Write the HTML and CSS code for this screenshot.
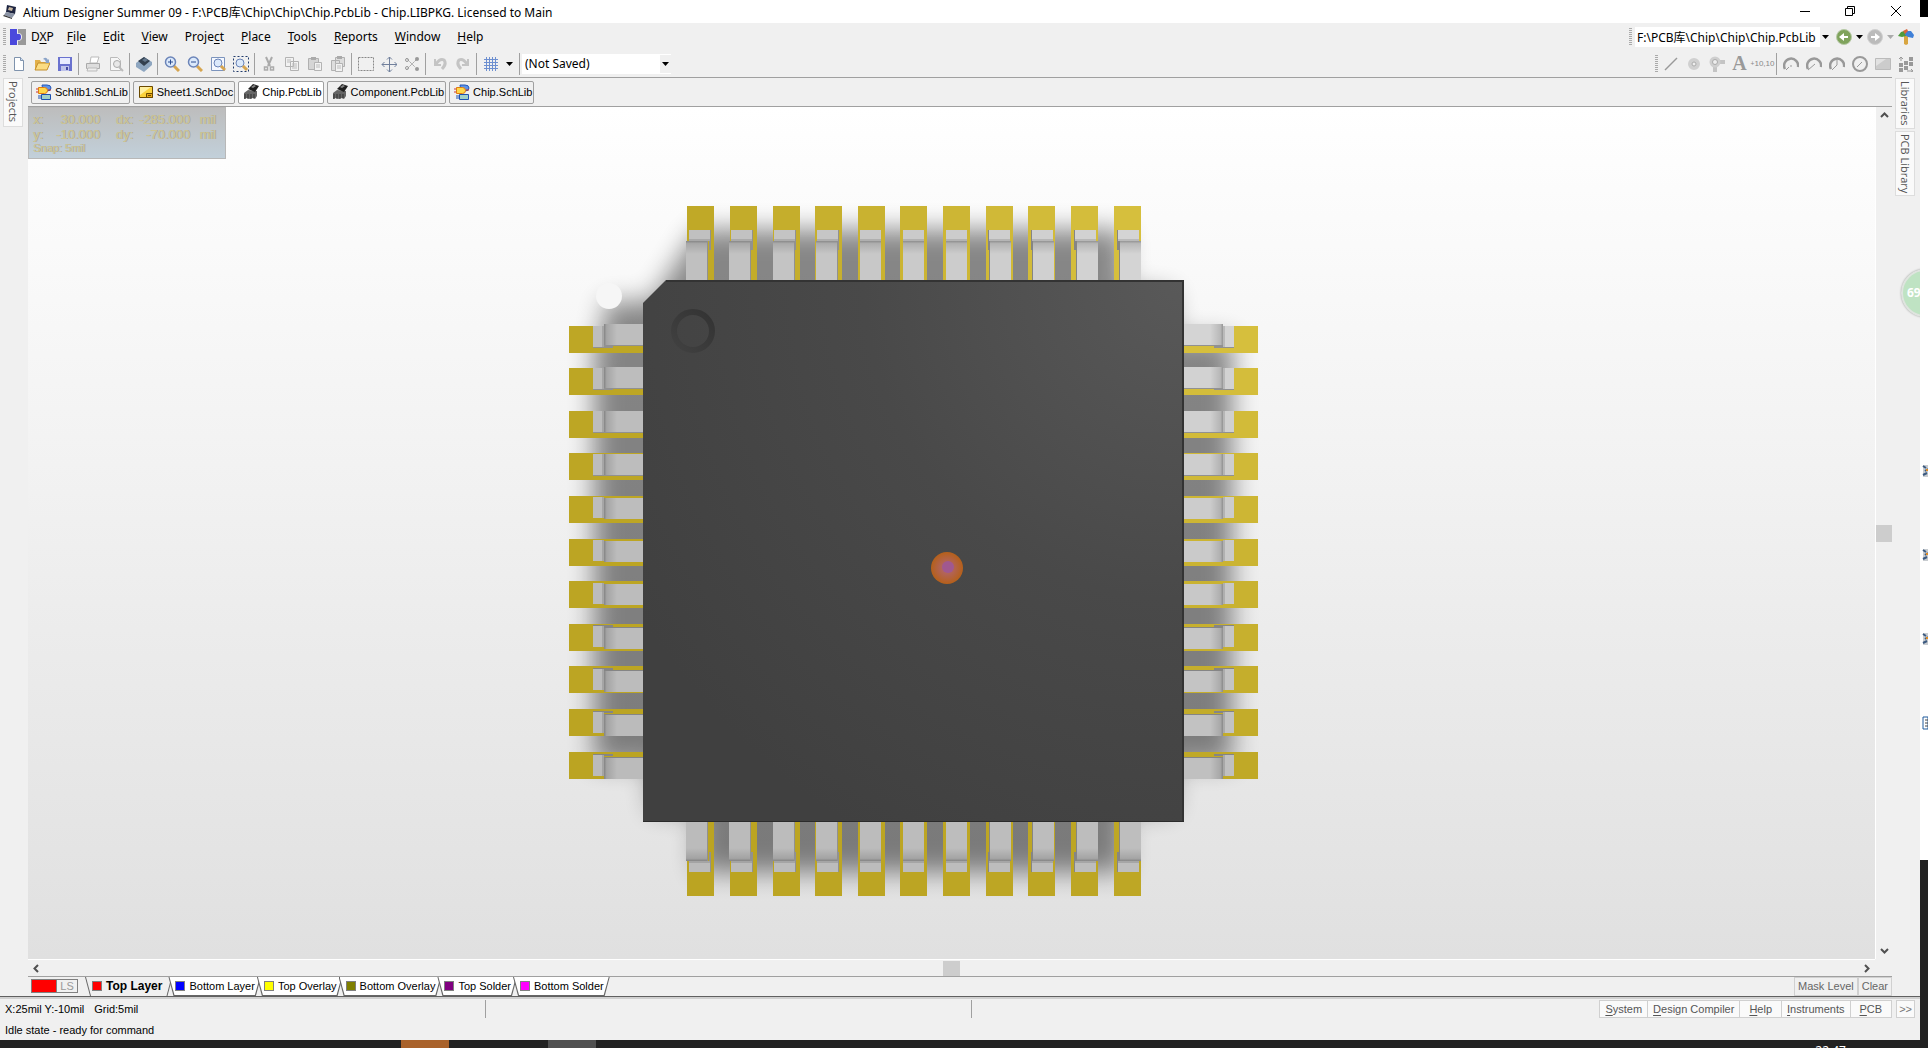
FILE: index.html
```html
<!DOCTYPE html>
<html lang="en">
<head>
  <meta charset="UTF-8">
  <meta name="viewport" content="width=device-width, initial-scale=1.0">
  <title>Altium Designer Summer 09</title>
  <link rel="stylesheet" href="styles.css">
</head>
<body>
  <!-- shared icon shapes -->
  <svg class="defs" aria-hidden="true">
    <symbol id="i-sch" viewBox="0 0 16 16">
      <path d="M6 1h5q4 0 4 3q0 3-4 3H7z" fill="#5d94ea" stroke="#2458b8"/>
      <path d="M2.500 3.500h6q3 0 3 3t-3 3h-6z" fill="#ffd84a" stroke="#e07b10"/>
      <path d="M0 5h2M0 8h2M12 6h3" stroke="#c33"/>
      <path d="M5.500 10.500h9v5h-9z" fill="#9fd0c8" stroke="#1c50b0"/>
      <path d="M2 12h3M2 14h3" stroke="#1c50b0"/>
    </symbol>
    <symbol id="i-doc" viewBox="0 0 16 16">
      <path d="M1.500 2.500h13v11h-13z" fill="#fbd23c" stroke="#6b4a00"/>
      <path d="M2 3h11L2 11z" fill="#fff0a0"/>
      <path d="M8.500 9.500h6v4h-6z" fill="#e8a818" stroke="#6b4a00"/>
      <path d="M10 11.500h3" stroke="#6b4a00"/>
    </symbol>
    <symbol id="i-pcb" viewBox="0 0 16 16">
      <path d="M1 9l4-3 9 1v5l-2 3-3-1-2 1-3-1-3 1z" fill="#666"/>
      <path d="M5 5l5-5 6 2-4 6z" fill="#1e1e1e"/>
      <path d="M8 3l3-2 2 1-3 2z" fill="#888"/>
      <path d="M2 10v5M5 10v5M8 10v5M11 10v4" stroke="#2e2e2e"/>
    </symbol>
    <symbol id="i-down" viewBox="0 0 7 4"><path d="M0 0h7L3.500 4z" fill="currentColor"/></symbol>
    <symbol id="i-lens" viewBox="0 0 16 16">
      <path d="M10 10l5 5" stroke="#d6a550" stroke-width="3"/>
      <circle cx="6.500" cy="6" r="5" fill="#dbe9fb" stroke="#6b84b8" stroke-width="1.500"/>
    </symbol>
    <symbol id="i-arc" viewBox="0 0 16 16">
      <path d="M2 13A7 7 0 1 1 15 11" fill="none" stroke="#999" stroke-width="2.500"/>
    </symbol>
  </svg>

  <div class="screen">
    <div class="app">
      <header class="title-bar">
        <svg class="icon" viewBox="0 0 16 16"><path d="M5 1l9 2-1 7-9-2z" fill="#1d2440"/><path d="M7 3l4 1-1 3-4-1z" fill="#c9b8a0"/><path d="M4 8l9 2-3 4-8-3z" fill="#8a93a5"/><path d="M2 11l8 3v1l-9-3z" fill="#333"/></svg>
        <h1>Altium Designer Summer 09 - F:\PCB库\Chip\Chip\Chip.PcbLib - Chip.LIBPKG. Licensed to Main</h1>
        <div class="window-buttons">
          <button aria-label="Minimize"><svg viewBox="0 0 10 10"><path d="M0 5.500h10"/></svg></button>
          <button aria-label="Restore"><svg viewBox="0 0 10 10"><path d="M.5 2.500h7v7h-7zM2.500 2.500v-2h7v7h-2"/></svg></button>
          <button aria-label="Close"><svg viewBox="0 0 10 10"><path d="M0 0l10 10M10 0L0 10"/></svg></button>
        </div>
      </header>

      <nav class="menu-bar">
        <span class="grip"></span>
        <svg class="icon dxp" viewBox="0 0 16 16"><path d="M0 0h7v5q4-1 4 3t-4 3v5H0z" fill="#4b49dc"/><path d="M8 0h8v16H8v-4q4 0 4-4t-4-4z" fill="#999"/></svg>
        <button class="dxp-item">D<u>X</u>P</button>
        <button><u>F</u>ile</button>
        <button><u>E</u>dit</button>
        <button><u>V</u>iew</button>
        <button>Proje<u>c</u>t</button>
        <button><u>P</u>lace</button>
        <button><u>T</u>ools</button>
        <button><u>R</u>eports</button>
        <button><u>W</u>indow</button>
        <button><u>H</u>elp</button>
        <div class="address">
          <span class="grip"></span>
          <input type="text" aria-label="Document path" value="F:\PCB库\Chip\Chip\Chip.PcbLib">
          <button class="drop" aria-label="Path history"><svg><use href="#i-down"/></svg></button>
          <button class="nav" aria-label="Back"><svg viewBox="0 0 16 16"><circle cx="8" cy="8" r="7.500" fill="#7fa35c" stroke="#b7c9a6"/><path d="M3 8l5-4v3h4v2H8v3z" fill="#fff"/></svg></button>
          <button class="drop plain" aria-label="Back list"><svg><use href="#i-down"/></svg></button>
          <button class="nav" aria-label="Forward"><svg viewBox="0 0 16 16"><circle cx="8" cy="8" r="7.500" fill="#bbb" stroke="#d0d0d0"/><path d="M13 8L8 4v3H4v2h4v3z" fill="#fff"/></svg></button>
          <button class="drop plain off" aria-label="Forward list"><svg><use href="#i-down"/></svg></button>
          <button class="nav" aria-label="Home"><svg viewBox="0 0 16 16"><path d="M6 6h4v9l-2 1-2-1z" fill="#d8a540"/><path d="M0 7l3-4 6-2-1 6-4 1z" fill="#4f9a3c"/><path d="M8 2l5 0 3 4-1 3-5-1-3-2z" fill="#3f80d8"/><path d="M5 2l4-2 1 2-3 3z" fill="#d8653c"/></svg></button>
        </div>
      </nav>

      <div class="tool-bar">
        <span class="grip"></span>
        <button aria-label="New"><svg viewBox="0 0 16 16"><path d="M3.500 1.500h6l3 3v10h-9z" fill="#fff" stroke="#7f93ad"/><path d="M9.500 1.500v3h3" fill="#cfe0f5" stroke="#7f93ad"/></svg></button>
        <button aria-label="Open"><svg viewBox="0 0 16 16"><path d="M1 14V4h5l1 2h6v8z" fill="#e2b04a"/><path d="M1 14l3-7h12l-3 7z" fill="#fbdc82" stroke="#c48f2c"/><path d="M9 3q3-3 5 1l1-1v4h-4l1-1q-1-3-3-3z" fill="#8aa3c8"/></svg></button>
        <button aria-label="Save"><svg viewBox="0 0 16 16"><path d="M1 1h14v14H1z" fill="#6a72cf"/><path d="M3 2h10v6H3z" fill="#e8ecff"/><path d="M4 10h8v5H4z" fill="#bfc4ea"/><path d="M9 11h2v3H9z" fill="#444ba0"/></svg></button>
        <span class="sep"></span>
        <button aria-label="Print"><svg viewBox="0 0 16 16"><path d="M5 7l1-6h8l-2 6z" fill="#fff" stroke="#bbb"/><path d="M1.500 7.500h13v5h-13z" fill="#ddd" stroke="#aaa"/><path d="M3 12h9v3H2z" fill="#eee" stroke="#bbb"/></svg></button>
        <button aria-label="Print preview"><svg viewBox="0 0 16 16"><path d="M2.500 1.500h7l3 3v10h-10z" fill="#f7f7f7" stroke="#bbb"/><circle cx="9" cy="8" r="3.500" fill="#e8e8e8" stroke="#aaa"/><path d="M11 11l4 4" stroke="#bbb" stroke-width="2"/></svg></button>
        <span class="sep"></span>
        <button aria-label="Board view"><svg viewBox="0 0 16 16"><path d="M0 7l8-6 8 5v3l-8 7-8-5z" fill="#8ea6c0"/><path d="M2 5l6-4 6 4-6 5z" fill="#33404f"/><path d="M6 4l3-2 3 2-3 2z" fill="#62758a"/></svg></button>
        <span class="sep"></span>
        <button aria-label="Zoom in"><svg viewBox="0 0 16 16"><use href="#i-lens"/><path d="M4 6h5M6.500 3.500v5" stroke="#2c4c90"/></svg></button>
        <button aria-label="Zoom out"><svg viewBox="0 0 16 16"><use href="#i-lens"/><path d="M4 6h5" stroke="#2c4c90"/></svg></button>
        <button aria-label="Fit document"><svg viewBox="0 0 16 16"><path d="M1.500 1.500h13v13h-13z" fill="#f4f8ff" stroke="#7c94bd"/><circle cx="8" cy="7" r="4" fill="#dbe9fb" stroke="#6b84b8"/><path d="M11 10l4 4" stroke="#d6a550" stroke-width="3"/></svg></button>
        <button aria-label="Zoom area"><svg viewBox="0 0 16 16"><path d="M.5.500h15v15H.5z" fill="none" stroke="#223c6c" stroke-dasharray="2 2"/><circle cx="7" cy="7" r="4" fill="#dbe9fb" stroke="#6b84b8"/><path d="M10 10l4 4" stroke="#d6a550" stroke-width="3"/></svg></button>
        <span class="sep"></span>
        <button aria-label="Cut"><svg viewBox="0 0 16 16"><path d="M5 1l4 9M11 1L7 10" stroke="#aaa" stroke-width="2"/><path d="M3.500 11h3v3h-3zM9.500 11h3v3h-3z" fill="none" stroke="#aaa" stroke-width="1.500"/></svg></button>
        <button aria-label="Copy"><svg viewBox="0 0 16 16"><path d="M1.500 1.500h8v9h-8zM6.500 5.500h8v9h-8z" fill="#f2f2f2" stroke="#b3b3b3"/><path d="M3 4h4M3 6h3M8 8h5M8 10h5M8 12h5" stroke="#bbb"/></svg></button>
        <button aria-label="Paste"><svg viewBox="0 0 16 16"><path d="M1.500 2.500h10v11h-10z" fill="#d5d5d5" stroke="#b0b0b0"/><path d="M4 1h5v3H4z" fill="#aaa"/><path d="M7.500 6.500h7v8h-7z" fill="#f2f2f2" stroke="#b3b3b3"/><path d="M9 9h4M9 11h4" stroke="#bbb"/></svg></button>
        <button aria-label="Paste special"><svg viewBox="0 0 16 16"><path d="M5.500 1.500h9v9h-9zM1.500 4.500h8v10h-8z" fill="#ddd" stroke="#b0b0b0"/><path d="M7 0h5v3H7z" fill="#aaa"/><path d="M5.500 7.500h7v8h-7z" fill="#f2f2f2" stroke="#b3b3b3"/><path d="M7 10h4M7 12h4" stroke="#bbb"/></svg></button>
        <span class="sep"></span>
        <button aria-label="Select inside area"><svg viewBox="0 0 16 16"><path d="M.5 1.500h15v13H.5z" fill="none" stroke="#888" stroke-dasharray="2 1"/></svg></button>
        <button aria-label="Move selection"><svg viewBox="0 0 16 16"><path d="M8.500 1v15M1 8.500h15M6 3.500l2.500-2.500 2.500 2.500M6 13.500l2.500 2.500 2.500-2.500M3.500 6L1 8.500 3.500 11M13.500 6l2.500 2.500-2.500 2.500" fill="none" stroke="#71809c"/></svg></button>
        <button aria-label="Deselect all"><svg viewBox="0 0 16 16"><path d="M2 2l9 9M2 14l10-10" stroke="#999" stroke-dasharray="2 1"/><circle cx="13" cy="3" r="2" fill="#999"/><circle cx="13" cy="13" r="2" fill="#999"/><circle cx="3" cy="4" r="1.500" fill="none" stroke="#999"/><circle cx="3" cy="12" r="1.500" fill="none" stroke="#999"/></svg></button>
        <span class="sep"></span>
        <button aria-label="Undo"><svg viewBox="0 0 16 16"><path d="M3 3v6h6" fill="none" stroke="#c4c4c4" stroke-width="2"/><path d="M4 8q4-6 8-4 3 4-2 9" fill="none" stroke="#c4c4c4" stroke-width="3"/></svg></button>
        <button aria-label="Redo"><svg viewBox="0 0 16 16"><path d="M13 3v6H7" fill="none" stroke="#c4c4c4" stroke-width="2"/><path d="M12 8q-4-6-8-4-3 4 2 9" fill="none" stroke="#c4c4c4" stroke-width="3"/></svg></button>
        <span class="sep"></span>
        <button aria-label="Grid"><svg viewBox="0 0 16 16"><path d="M3.500 1v14M6.500 1v14M9.500 1v14M12.500 1v14M1 3.500h14M1 6.500h14M1 9.500h14M1 12.500h14" stroke="#6d8fd0"/></svg></button>
        <button class="drop plain" aria-label="Grid list"><svg><use href="#i-down"/></svg></button>
        <span class="sep"></span>
        <div class="combo">
          <select aria-label="Saved view"><option>(Not Saved)</option></select>
          <span class="drop"><svg><use href="#i-down"/></svg></span>
        </div>
        <div class="place-tools">
          <span class="grip"></span>
          <button aria-label="Place line"><svg viewBox="0 0 16 16"><path d="M2 14L14 2" stroke="#999" stroke-width="1.500"/></svg></button>
          <button aria-label="Place pad"><svg viewBox="0 0 16 16"><circle cx="8" cy="8" r="4" fill="none" stroke="#d0d0d0" stroke-width="4"/><circle cx="8" cy="8" r="2" fill="#eee" stroke="#aaa"/></svg></button>
          <button aria-label="Place via"><svg viewBox="0 0 16 16"><path d="M7 6h9M6 6v10" stroke="#c4c4c4" stroke-width="4"/><circle cx="6" cy="6" r="5.500" fill="#cfcfcf"/><circle cx="6" cy="6" r="2.500" fill="#eee" stroke="#aaa"/></svg></button>
          <button class="letter" aria-label="Place string">A</button>
          <button class="coord" aria-label="Place coordinate"><sub>+</sub>10,10</button>
          <span class="sep"></span>
          <button aria-label="Arc by center"><svg viewBox="0 0 16 16"><use href="#i-arc"/><path d="M3 14l3-3M7 10h2" stroke="#999"/></svg></button>
          <button aria-label="Arc by edge"><svg viewBox="0 0 16 16"><use href="#i-arc"/><path d="M2 14l7-6" stroke="#999"/></svg></button>
          <button aria-label="Arc any angle"><svg viewBox="0 0 16 16"><use href="#i-arc"/><path d="M3 14l5-5V3" fill="none" stroke="#999"/></svg></button>
          <button aria-label="Full circle"><svg viewBox="0 0 16 16"><circle cx="8" cy="8" r="7" fill="none" stroke="#999" stroke-width="2"/><path d="M5 11l5-5" stroke="#999"/></svg></button>
          <button aria-label="Place fill"><svg viewBox="0 0 16 16"><path d="M.5 2.500h15v11H.5z" fill="#ccc" stroke="#bbb"/><path d="M1 3h10L1 10z" fill="#e2e2e2"/></svg></button>
          <button aria-label="Paste array"><svg viewBox="0 0 16 16"><path d="M1 7h4v4H1zM1 12h4v4H1zM6 5h4v4H6zM6 10h4v4H6zM11 1h4v4h-4zM11 6h4v4h-4z" fill="#999"/><path d="M3 5V1M1 3l2-2 2 2M9 15h6M13 13l2 2-2 1" fill="none" stroke="#999"/></svg></button>
        </div>
      </div>

      <main class="workspace">
        <aside class="rail left">
          <button>Projects</button>
        </aside>

        <section class="editor">
          <div class="doc-tabs">
            <button><svg class="icon"><use href="#i-sch"/></svg>Schlib1.SchLib</button>
            <button><svg class="icon"><use href="#i-doc"/></svg>Sheet1.SchDoc</button>
            <button class="active"><svg class="icon"><use href="#i-pcb"/></svg>Chip.PcbLib</button>
            <button><svg class="icon"><use href="#i-pcb"/></svg>Component.PcbLib</button>
            <button><svg class="icon"><use href="#i-sch"/></svg>Chip.SchLib</button>
          </div>

          <div class="view-row">
            <div class="view">
              <svg class="board" viewBox="28 107 1847 852" role="img" aria-label="3D view of a 44 pin chip">
                <defs>
                  <radialGradient id="bodyFill" gradientUnits="userSpaceOnUse" cx="1184" cy="280" r="640">
                    <stop offset="0" stop-color="#595959"/>
                    <stop offset=".5" stop-color="#494949"/>
                    <stop offset="1" stop-color="#404040"/>
                  </radialGradient>
                  <linearGradient id="bend" x1="0" y1="0" x2="0" y2="1">
                    <stop offset="0" stop-color="#000" stop-opacity="0"/>
                    <stop offset=".8" stop-color="#000" stop-opacity=".13"/>
                    <stop offset="1" stop-color="#000" stop-opacity=".3"/>
                  </linearGradient>
                  <linearGradient id="ring" x1="0" y1="1" x2="1" y2="0">
                    <stop offset="0" stop-color="#414141"/>
                    <stop offset="1" stop-color="#333"/>
                  </linearGradient>
                  <radialGradient id="origin">
                    <stop offset="0" stop-color="#b0667c"/>
                    <stop offset="1" stop-color="#b5601a"/>
                  </radialGradient>
                  <filter id="soft" x="-20%" y="-20%" width="140%" height="140%"><feGaussianBlur stdDeviation="13"/></filter>
                </defs>
                <g filter="url(#soft)" opacity=".46">
                  <path d="M698 230h426v62h48v46h60v426h-60v46h-48v62H698v-62h-46v-46h-58V338h10v-36h48z"/>
                </g>
                <g id="pins"></g>
                <circle cx="609" cy="296" r="13" fill="#f6f6f6"/>
                <path d="M666 280h518v542H643V303z" fill="url(#bodyFill)"/>
                <path d="M666 281h517v540" fill="none" stroke="#333" stroke-width="2"/>
                <path d="M643 821.500h541" stroke="#2b2b2b"/>
                <circle cx="693" cy="331" r="19" fill="none" stroke="url(#ring)" stroke-width="6"/>
                <circle cx="947" cy="568" r="16" fill="url(#origin)"/>
                <circle cx="948" cy="567" r="6" fill="#a05890"/>
              </svg>
              <div class="hud">
                <span>x:</span><span>30.000</span><span>dx:</span><span>-285.000</span><span>mil</span>
                <span>y:</span><span>-10.000</span><span>dy:</span><span>-70.000</span><span>mil</span>
                <small>Snap: 5mil</small>
              </div>
            </div>
            <div class="scroll vertical">
              <button aria-label="Scroll up"><svg viewBox="0 0 9 9"><path d="M1 6l3.500-3.500L8 6"/></svg></button>
              <span class="thumb"></span>
              <button aria-label="Scroll down"><svg viewBox="0 0 9 9"><path d="M1 3l3.500 3.500L8 3"/></svg></button>
            </div>
          </div>
          <div class="scroll horizontal">
            <button aria-label="Scroll left"><svg viewBox="0 0 9 9"><path d="M6 1L2.500 4.500L6 8"/></svg></button>
            <span class="thumb"></span>
            <button aria-label="Scroll right"><svg viewBox="0 0 9 9"><path d="M3 1l3.500 3.500L3 8"/></svg></button>
          </div>

          <div class="layer-bar">
            <div class="layer-set"><span class="current"></span><button>LS</button></div>
            <div class="layer-tabs">
              <button class="active"><i class="red"></i>Top Layer</button>
              <button><i class="blue"></i>Bottom Layer</button>
              <button><i class="yellow"></i>Top Overlay</button>
              <button><i class="olive"></i>Bottom Overlay</button>
              <button><i class="purple"></i>Top Solder</button>
              <button><i class="magenta"></i>Bottom Solder</button>
            </div>
            <div class="mask-buttons"><button>Mask Level</button><button>Clear</button></div>
          </div>
        </section>

        <aside class="rail right">
          <button>Libraries</button>
          <button>PCB Library</button>
        </aside>
      </main>

      <footer class="status">
        <div class="status-row">
          <span class="cell"><span>X:25mil Y:-10mil</span><span>Grid:5mil</span></span>
          <span class="cell"></span>
          <div class="panels">
            <button><u>S</u>ystem</button>
            <button><u>D</u>esign Compiler</button>
            <button><u>H</u>elp</button>
            <button><u>I</u>nstruments</button>
            <button><u>P</u>CB</button>
          </div>
          <button class="more">&gt;&gt;</button>
        </div>
        <p>Idle state - ready for command</p>
      </footer>

      <div class="badge">69</div>
    </div>

    <div class="desktop-edge">
      <svg viewBox="0 0 8 1040">
        <g id="shortcut"><path d="M3 465h5v12H3z" fill="#c8ccd0"/><path d="M3 466l3 2M5 471l3-2M3 475l4-2" stroke="#3c5a80" stroke-width="2"/><path d="M6 469h2v2H6z" fill="#e08a20"/></g>
        <use href="#shortcut" y="84"/>
        <use href="#shortcut" y="168"/>
        <path d="M3 717h5v12H3z" fill="#fff" stroke="#1f5a9c"/><path d="M5 720h3M5 723h3M5 726h3" stroke="#444"/>
      </svg>
    </div>
  </div>

  <div class="task-bar">
    <span class="task orange"></span>
    <span class="task grey"></span>
    <time>22:47</time>
  </div>

  <script src="script.js"></script>
</body>
</html>
```

FILE: styles.css
```css
* {
  box-sizing: border-box;
}

body {
  margin: 0;
  height: 100vh;
  display: flex;
  flex-direction: column;
  overflow: hidden;
  background: #f0f0f0;
  color: #000;
  font-family: "Liberation Sans", Arial, sans-serif;
  font-size: 11px;
}

button {
  margin: 0;
  padding: 0;
  border: none;
  background: none;
  color: inherit;
  font: inherit;
  white-space: nowrap;
}

.defs {
  position: absolute;
  width: 0;
  height: 0;
}

.icon {
  width: 16px;
  height: 16px;
  flex: none;
}

.screen {
  flex: 1;
  min-height: 0;
  display: flex;
}

.app {
  flex: 1;
  min-width: 0;
  display: flex;
  flex-direction: column;
  position: relative;
  overflow: hidden;
}

/* title bar */
.title-bar {
  display: flex;
  align-items: center;
  height: 23px;
  padding-left: 2px;
  gap: 5px;
  background: #fff;
}

.title-bar h1 {
  margin: 0;
  font: 12px "Noto Sans", "Noto Sans CJK SC", sans-serif;
}

.window-buttons {
  display: flex;
  margin-left: auto;
}

.window-buttons button {
  width: 45px;
  height: 20px;
}

.window-buttons button:last-child {
  width: 48px;
}

.window-buttons svg {
  width: 10px;
  height: 10px;
  overflow: visible;
  fill: none;
  stroke: #000;
}

/* menus and tools */
.menu-bar,
.tool-bar {
  display: flex;
  align-items: center;
  height: 27px;
  padding: 0 3px;
  font: 12px "Noto Sans", "Noto Sans CJK SC", sans-serif;
}

.menu-bar {
  padding-right: 6px;
}

.menu-bar button {
  margin-right: 17px;
}

.menu-bar .dxp-item {
  margin-right: 13px;
}

.menu-bar u,
.panels u {
  text-underline-offset: 2px;
}

.dxp {
  margin: 0 5px 0 4px;
}

.grip {
  flex: none;
  width: 3px;
  height: 17px;
  background: repeating-linear-gradient(#aaa 0 1px, transparent 1px 2px);
}

.address,
.place-tools {
  display: flex;
  align-items: center;
  margin-left: auto;
}

.address input {
  width: 185px;
  height: 20px;
  margin-left: 3px;
  padding: 0 2px;
  border: none;
  background: #fff;
  font: inherit;
}

.address button {
  margin: 0;
}

.drop {
  display: flex;
  align-items: center;
  justify-content: center;
  width: 11px;
  height: 18px;
  background: #f0f0f0;
}

.drop svg {
  width: 7px;
  height: 4px;
}

.drop.plain,
.tool-bar .drop.plain {
  width: 15px;
}

.drop.off {
  color: #aaa;
}

.nav {
  width: 16px;
  height: 16px;
}

.address .drop:nth-of-type(1) {
  margin-right: 5px;
}

.nav svg {
  display: block;
  width: 16px;
  height: 16px;
}

.tool-bar button {
  display: flex;
  align-items: center;
  justify-content: center;
  width: 23px;
  height: 22px;
}

.tool-bar .grip + button {
  margin-left: 1px;
}

.tool-bar button svg {
  width: 16px;
  height: 16px;
}

.tool-bar button.drop svg {
  width: 7px;
  height: 4px;
}

.sep {
  flex: none;
  width: 1px;
  height: 22px;
  margin: 0 2px;
  background: #a0a0a0;
}

.combo {
  display: flex;
  align-items: center;
  width: 149px;
  height: 20px;
  background: #fff;
}

.combo select {
  appearance: none;
  flex: 1;
  padding: 0 3px;
  border: none;
  background: none;
  font: inherit;
  color: inherit;
}

.tool-bar .letter {
  color: #999;
  font: bold 20px "Liberation Serif", serif;
}

.tool-bar .coord {
  color: #888;
  font: 8px "Liberation Sans", sans-serif;
}

/* workspace */
.workspace {
  flex: 1;
  min-height: 0;
  display: flex;
}

.rail {
  width: 28px;
  padding: 1px 3px;
  display: flex;
  flex-direction: column;
  align-items: flex-start;
  gap: 2px;
}

.rail button {
  width: 20px;
  padding: 2px 0 4px;
  border: 1px solid #ddd;
  background: #fafafa;
  color: #555;
  font: 11px "Open Sans", sans-serif;
  writing-mode: vertical-rl;
}

.rail.right button {
  padding: 2px 0;
}

.editor {
  flex: 1;
  min-width: 0;
  display: flex;
  flex-direction: column;
}

.doc-tabs {
  display: flex;
  align-items: center;
  gap: 3px;
  height: 30px;
  padding: 0 3px;
  border-top: 1px solid #a0a0a0;
  border-bottom: 1px solid #a0a0a0;
}

.doc-tabs button {
  display: flex;
  align-items: center;
  gap: 3px;
  height: 23px;
  padding: 0 1px 0 4px;
  border: 1px solid #a0a0a0;
  border-radius: 2px;
}

.doc-tabs .active {
  background: #fff;
}

.view-row {
  flex: 1;
  min-height: 0;
  display: flex;
}

.view {
  flex: 1;
  min-width: 0;
  position: relative;
  background: linear-gradient(#fff, #e0e0e0);
}

.board {
  display: block;
  width: 100%;
  height: 100%;
}

/* coordinates shown over the board */
.hud {
  position: absolute;
  top: 0;
  left: 0;
  display: grid;
  grid-template-columns: 15px 52px 33px 57px 26px;
  grid-auto-rows: 15px;
  width: 198px;
  height: 52px;
  padding: 4px;
  border: 1px solid #b8b8b8;
  background: linear-gradient(#bdbdbd, #c2d0da);
  color: #cdc594;
  font-size: 13px;
  text-align: right;
  text-shadow: 1px 0 #a9a794;
}

.hud span:nth-of-type(5n + 1) {
  text-align: left;
}

.hud small {
  grid-column: 1 / -1;
  font-size: 11px;
  text-align: left;
}

.scroll {
  display: flex;
  align-items: center;
  justify-content: space-between;
  background: #f0f0f0;
}

.scroll.vertical {
  flex-direction: column;
  width: 17px;
  border-left: 1px solid #fff;
}

.scroll.horizontal {
  height: 17px;
  margin-right: 17px;
  border-top: 1px solid #fff;
}

.scroll button {
  display: flex;
  align-items: center;
  justify-content: center;
  width: 17px;
  height: 17px;
}

.scroll svg {
  width: 9px;
  height: 9px;
  fill: none;
  stroke: #505050;
  stroke-width: 2;
}

.thumb {
  width: 16px;
  height: 17px;
  background: #cdcdcd;
}

.horizontal .thumb {
  width: 17px;
  height: 15px;
}

/* layer tabs */
.layer-bar {
  display: flex;
  height: 20px;
  border-top: 1px solid #a0a0a0;
}

.layer-set {
  display: flex;
  height: 14px;
  margin: 2px 7px 0 3px;
  border: 1px solid #808080;
  color: #999;
}

.layer-set .current {
  width: 25px;
  border-right: 1px solid #808080;
  background: #f00;
}

.layer-set button {
  width: 20px;
  line-height: 12px;
}

.layer-tabs {
  display: flex;
}

.layer-tabs button {
  position: relative;
  z-index: 0;
  display: flex;
  align-items: center;
  gap: 4px;
  height: 19px;
  margin-right: -4px;
  padding: 0 6px 1px 7px;
  background: #666;
  clip-path: polygon(0 0, 100% 0, calc(100% - 5px) 100%, 5px 100%);
}

.layer-tabs button::before {
  content: "";
  position: absolute;
  z-index: -1;
  inset: 0 1px 1px;
  background: #fff;
  clip-path: polygon(0 0, 100% 0, calc(100% - 5px) 100%, 5px 100%);
}

.layer-tabs .active {
  padding-right: 10px;
  font-size: 12px;
  font-weight: bold;
}

.layer-tabs .active::before {
  bottom: 0;
  background: #f0f0f0;
}

.layer-tabs i {
  width: 10px;
  height: 10px;
  border: 1px solid #808080;
}

.red { background: #f00; }
.blue { background: #00f; }
.yellow { background: #ff0; }
.olive { background: #808000; }
.purple { background: #800080; }
.magenta { background: #f0f; }

.mask-buttons {
  display: flex;
  margin-left: auto;
  color: #666;
}

.mask-buttons button {
  padding: 0 3px 1px;
  border: 1px solid #d0d0d0;
}

/* status bar */
.status {
  height: 44px;
  border-top: 1px solid #606060;
  box-shadow: inset 0 2px #d0d0d0;
}

.status-row {
  display: flex;
  align-items: center;
  height: 24px;
  padding: 0 5px 0 0;
}

.cell {
  display: flex;
  align-items: center;
  gap: 10px;
  width: 486px;
  height: 18px;
  padding-left: 5px;
  border-right: 1px solid #a0a0a0;
}

.panels {
  display: flex;
  margin-left: auto;
  color: #555;
}

.panels button,
.more {
  height: 18px;
  padding: 0 5px;
  border: 1px solid #d0d0d0;
  background: #fafafa;
}

.panels button + button {
  border-left: none;
}

.panels button:nth-child(3),
.panels button:last-child {
  padding: 0 9px;
}

.status-row .more {
  margin-left: 4px;
  padding: 0 2px;
  color: #777;
}

.status p {
  margin: 0;
  padding: 0 5px;
  line-height: 18px;
}

/* floating round badge at the screen edge */
.badge {
  position: absolute;
  top: 269px;
  right: -29px;
  width: 48px;
  height: 48px;
  padding-left: 4px;
  border: 2px solid #dfe4df;
  border-radius: 50%;
  background: #bfe3c3;
  box-shadow: 0 0 2px #999;
  color: #fff;
  font: bold 12px/44px "Noto Sans", sans-serif;
}

.desktop-edge {
  width: 8px;
  background: linear-gradient(#000 0 17px, #fff 17px 860px, #222 860px);
}

.desktop-edge svg {
  display: block;
  width: 8px;
}

/* task bar */
.task-bar {
  display: flex;
  height: 8px;
  padding: 0 82px 0 401px;
  gap: 99px;
  overflow: hidden;
  background: #222;
  color: #fff;
}

.task {
  width: 48px;
  height: 8px;
}

.orange { background: #a9622b; }
.grey { background: #505050; }

.task-bar time {
  margin-left: auto;
  padding-top: 2px;
  font: 12px "Noto Sans", sans-serif;
}
```

FILE: script.js
```js
const pins = document.getElementById('pins');
const NS = 'http://www.w3.org/2000/svg';

// each side is drawn in its own axes: u runs along the edge, v points away from the body
const sides = [
  { matrix: '1 0 0 -1 0 280', pad: 687.8, foot: 689, lead: 686, light: i => 0.2 + i * 0.08 },
  { matrix: '1 0 0 1 0 822', pad: 687.8, foot: 689, lead: 686, light: i => i * 0.01 },
  { matrix: '0 1 -1 0 643 0', pad: 326, foot: 326, lead: 324, light: i => 0.1 - i * 0.01 },
  { matrix: '0 1 1 0 1184 0', pad: 326, foot: 326, lead: 324, light: i => 1 - i * 0.08 }
];

function mix(from, to, t) {
  return 'rgb(' + from.map((c, k) => Math.round(c + (to[k] - c) * t)).join(',') + ')';
}

function rect(group, u, v, w, h, fill) {
  const r = document.createElementNS(NS, 'rect');
  r.setAttribute('x', u);
  r.setAttribute('y', v);
  r.setAttribute('width', w);
  r.setAttribute('height', h);
  r.setAttribute('fill', fill);
  group.appendChild(r);
}

sides.forEach(side => {
  const g = document.createElementNS(NS, 'g');
  g.setAttribute('transform', 'matrix(' + side.matrix + ')');
  for (let i = 0; i < 11; i++) {
    const pad = Math.floor(side.pad + i * 42.62);
    const foot = Math.floor(side.foot + i * 42.9);
    const lead = Math.round(side.lead + i * 43.4);
    const t = side.light(i);
    const metal = mix([187, 187, 187], [212, 212, 212], t);

    rect(g, pad, 0, 27, 74, mix([187, 164, 34], [214, 191, 61], t));
    // side wall of the lead, seen on the half that faces the middle
    if (i < 4) {
      rect(g, foot + 20, 30, 2, 20, '#919191');
      rect(g, lead + 20, 0, 2, 39, '#919191');
    } else if (i > 6) {
      rect(g, foot - 1, 30, 2, 20, '#858585');
      rect(g, lead - 1, 0, 2, 39, '#858585');
    }
    rect(g, foot, 39, 21, 11, metal);
    rect(g, foot, 39, 21, 2, 'rgba(0,0,0,0.12)');
    rect(g, lead, 0, 21, 39, metal);
    rect(g, lead, 26, 21, 13, 'url(#bend)');
  }
  pins.appendChild(g);
});
```
